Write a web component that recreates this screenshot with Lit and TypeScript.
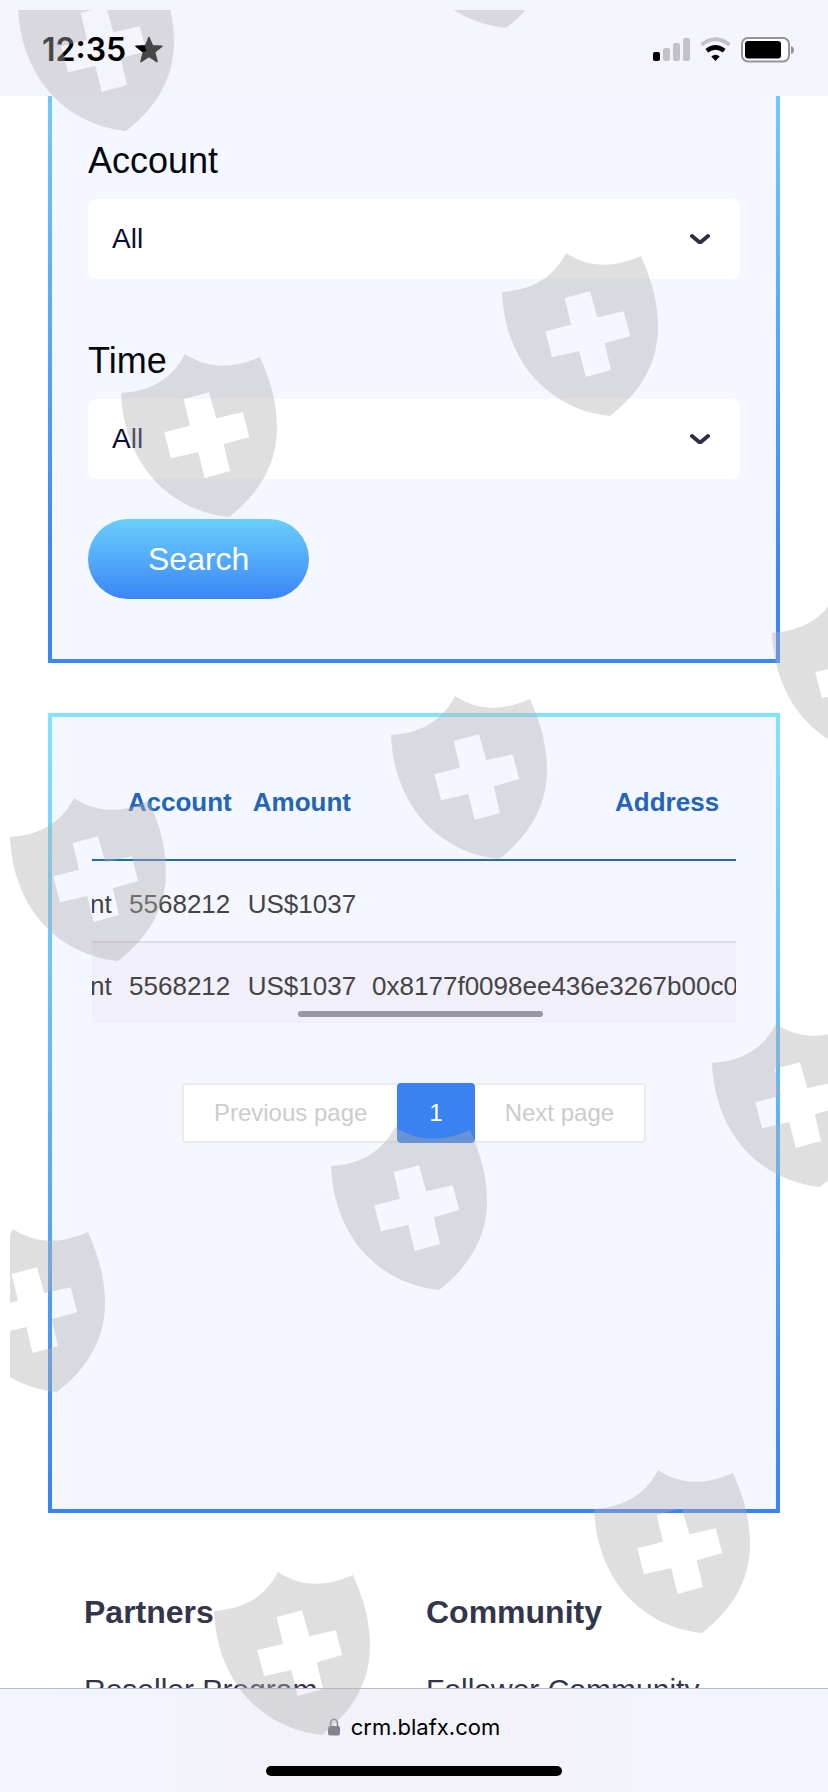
import { LitElement, html, css, svg } from "lit";
import { customElement } from "lit/decorators.js";

const SHIELD =
  "M0 39C25 37 49 29 64 0C85 14 110 16 139 3C150 28 156 50 156 74C156 110 138 140 108 163C50 157 3 112 0 39Z" +
  "M62.7 45L69 71.7L43.3 78.3L50 104.3L77.3 98L83.7 124L109 117L102.7 90.3L128.3 83L121.7 58.3L95.3 64.3L88 38.3Z";

const SHIELD_SPOTS = [
  [8, -42], [388, -145], [492, 243], [111, 344], [762, 584], [381, 686],
  [0, 788], [702, 1014], [321, 1117], [-61, 1219], [584, 1460], [204, 1562],
];

const ROWS = [
  { type: "nt", account: "5568212", amount: "US$1037", address: "" },
  { type: "nt", account: "5568212", amount: "US$1037", address: "0x8177f0098ee436e3267b00c0" },
];

const FOOTER = [
  { title: "Partners", link: "Reseller Program" },
  { title: "Community", link: "Follower Community" },
];

@customElement("status-bar")
class StatusBar extends LitElement {
  static styles = css`
    :host {
      display: flex;
      align-items: center;
      justify-content: space-between;
      box-sizing: border-box;
      flex: none;
      height: 96px;
      padding: 4px 34px 0 42px;
      background: #f4f4fd;
    }
    .clock {
      display: flex;
      align-items: center;
      gap: 8px;
      font: 600 32px/40px Inter, sans-serif;
      color: #000;
    }
    svg { display: block; }
  `;
  render() {
    return html`
      <div class="clock">
        <span>12:35</span>
        <svg width="30" height="28" viewBox="0 0 30 28" aria-hidden="true">
          <path d="M15 1.5L18.4 9.8L28 10.2L20.5 16L23 25.500L15 20.300L7 25.500L9.5 16L2 10.2L11.6 9.8Z" stroke="#000" stroke-width="1.6" stroke-linejoin="round" />
        </svg>
      </div>
      <svg width="141" height="26" viewBox="0 0 141 26" aria-hidden="true">
        <rect x="0" y="15" width="7" height="9" rx="2" />
        <g fill="#c2c1c9">
          <rect x="10" y="11" width="7" height="13" rx="2" />
          <rect x="20" y="6" width="7" height="18" rx="2" />
          <rect x="30" y="1" width="7" height="23" rx="2" />
        </g>
        <path d="M48.5 7.8Q62.5 -3.4 76.5 7.8" fill="none" stroke="#c2c1c9" stroke-width="4" />
        <path d="M53.8 13.8Q62.5 7 71.2 13.8" fill="none" stroke="#000" stroke-width="4.5" />
        <path d="M58.3 19.4Q62.5 16 66.7 19.4L62.5 24Z" />
        <rect x="89" y="1" width="47" height="23.5" rx="6" fill="#fff" stroke="#94939b" stroke-width="2" />
        <rect x="92" y="4" width="36" height="17.5" rx="3" />
        <path d="M138 9Q141 10 141 13T138 17Z" fill="#94939b" />
      </svg>
    `;
  }
}

@customElement("browser-bar")
class BrowserBar extends LitElement {
  static styles = css`
    :host {
      display: flex;
      flex-direction: column;
      align-items: center;
      justify-content: space-between;
      box-sizing: border-box;
      flex: none;
      height: 104px;
      padding: 23px 0 16px;
      border-top: 1px solid #b9b9c9;
      background: linear-gradient(90deg, #f2f5fe, #f3f2fb 35%, #f3f2fb 60%, #f2f5fe);
    }
    .address {
      display: flex;
      align-items: center;
      gap: 11px;
      font: 22px/30px Inter, sans-serif;
      color: #000;
      text-decoration: none;
    }
    .home {
      width: 296px;
      height: 10px;
      border-radius: 5px;
      background: #000;
    }
  `;
  render() {
    return html`
      <a class="address" href="#">
        <svg width="12" height="18" viewBox="0 0 12 18" aria-hidden="true">
          <path d="M2.5 9V5.5A3.5 4.3 0 0 1 9.5 5.5V9" fill="none" stroke="#85848c" stroke-width="1.6" />
          <rect y="8" width="12" height="9.5" rx="2" fill="#85848c" />
        </svg>
        <span>crm.blafx.com</span>
      </a>
      <div class="home"></div>
    `;
  }
}

@customElement("app-root")
class AppRoot extends LitElement {
  static styles = css`
    :host {
      display: flex;
      flex-direction: column;
      position: relative;
      height: 100vh;
      overflow: hidden;
      background: #fff;
      font-family: "Liberation Sans", Arial, sans-serif;
    }
    main {
      flex: 1;
      min-height: 0;
      overflow: hidden;
      padding: 0 48px;
    }
    .card {
      box-sizing: border-box;
      border: 4px solid;
      border-image: linear-gradient(#80e4fd, #3a82f8) 1;
      background: #f4f7ff;
    }
    .filters {
      padding: 45px 36px 60px;
      border-top: 0;
      border-image: linear-gradient(#6ecbfd, #3b86f8 85%) 1;
    }
    .field { display: grid; gap: 18px; }
    .field + .field { margin-top: 62px; }
    label {
      font-size: 36px;
      line-height: 40px;
      color: #05080f;
    }
    .picker { display: grid; align-items: center; }
    .picker > * { grid-area: 1 / 1; }
    select {
      appearance: none;
      box-sizing: border-box;
      width: 100%;
      height: 80px;
      padding: 0 24px;
      border: 0;
      border-radius: 8px;
      background: #fff;
      color: #0a0e33;
      font: 28px/40px "Liberation Sans", Arial, sans-serif;
    }
    .chevron {
      justify-self: end;
      margin-right: 30px;
      pointer-events: none;
    }
    .search {
      display: block;
      height: 80px;
      margin-top: 40px;
      padding: 0 60px;
      border: 0;
      border-radius: 40px;
      background: linear-gradient(#69cffb, #3b86f7);
      color: #fff;
      font: 32px/40px "Liberation Sans", Arial, sans-serif;
    }
    .records {
      min-height: 800px;
      margin-top: 50px;
      padding: 28px 40px;
    }
    .scroller { position: relative; overflow: hidden; }
    .thumb {
      position: absolute;
      right: 30%;
      bottom: 6px;
      width: 38%;
      height: 6px;
      border-radius: 3px;
      background: #9997a1;
    }
    table {
      margin-left: -2px;
      border-collapse: separate;
      border-spacing: 0;
      font-size: 26px;
      line-height: 30px;
      white-space: nowrap;
    }
    th, td {
      box-sizing: border-box;
      padding: 0 8px;
      text-align: center;
    }
    th {
      height: 116px;
      border-bottom: 2px solid #2269bb;
      color: #2365b8;
    }
    td {
      height: 80px;
      padding-top: 6px;
      color: #444;
    }
    tbody tr:first-child td {
      height: 82px;
      border-bottom: 2px solid #dcdeea;
    }
    tbody tr:nth-child(even) { background: #f1eff9; }
    th:first-child, td:first-child { padding-left: 0; }
    .wide { min-width: 606px; text-align: left; }
    .pager {
      display: flex;
      justify-content: center;
      margin-top: 60px;
    }
    .pager button {
      box-sizing: border-box;
      height: 60px;
      padding: 0 30px;
      border: 2px solid #ebebed;
      background: #fff;
      color: #ccc;
      font: 24px/30px "Liberation Sans", Arial, sans-serif;
    }
    .pager button:first-child { border-right: 0; border-radius: 4px 0 0 4px; }
    .pager button:last-child { border-left: 0; border-radius: 0 4px 4px 0; }
    .pager .current {
      padding: 0 32px;
      border: 0;
      border-radius: 4px;
      background: #3a81f1;
      color: #fff;
    }
    footer {
      display: grid;
      grid-template-columns: 1fr 1fr;
      padding: 79px 12px 0 36px;
      color: #33364b;
    }
    h2 { margin: 0 0 38px; font-size: 32px; line-height: 40px; }
    footer a {
      color: inherit;
      font-size: 30px;
      line-height: 40px;
      text-decoration: none;
    }
    .shields {
      position: absolute;
      inset: 10px 0 0 10px;
      overflow: hidden;
      pointer-events: none;
    }
    .shields svg { display: block; width: 100%; height: 100%; }
  `;

  private picker(id: string, label: string) {
    return html`
      <div class="field">
        <label for=${id}>${label}</label>
        <div class="picker">
          <select id=${id}><option>All</option></select>
          <svg class="chevron" width="20" height="12" viewBox="0 0 20 12" aria-hidden="true">
            <path d="M2 3L8.5 8.5Q10 9.5 11.5 8.5L18 3" fill="none" stroke="#2c2f45" stroke-width="4" stroke-linecap="round" />
          </svg>
        </div>
      </div>
    `;
  }

  render() {
    return html`
      <status-bar></status-bar>
      <main>
        <form class="card filters" @submit=${(e: Event) => e.preventDefault()}>
          ${this.picker("account", "Account")} ${this.picker("time", "Time")}
          <button class="search">Search</button>
        </form>
        <section class="card records">
          <div class="scroller">
            <table>
              <thead>
                <tr><th></th><th>Account</th><th>Amount</th><th>Address</th></tr>
              </thead>
              <tbody>
                ${ROWS.map(
                  (r) => html`<tr>
                    <td>${r.type}</td><td>${r.account}</td><td>${r.amount}</td><td class="wide">${r.address}</td>
                  </tr>`
                )}
              </tbody>
            </table>
            <div class="thumb"></div>
          </div>
          <nav class="pager" aria-label="Pages">
            <button>Previous page</button>
            <button class="current">1</button>
            <button>Next page</button>
          </nav>
        </section>
        <footer>
          ${FOOTER.map((f) => html`<div><h2>${f.title}</h2><a href="#">${f.link}</a></div>`)}
        </footer>
      </main>
      <browser-bar></browser-bar>
      <div class="shields">
        <svg aria-hidden="true">
          ${SHIELD_SPOTS.map(
            ([x, y]) => svg`<path d=${SHIELD} fill-rule="evenodd" fill="#afafaf" fill-opacity="0.4" transform="translate(${x} ${y})" />`
          )}
        </svg>
      </div>
    `;
  }
}
